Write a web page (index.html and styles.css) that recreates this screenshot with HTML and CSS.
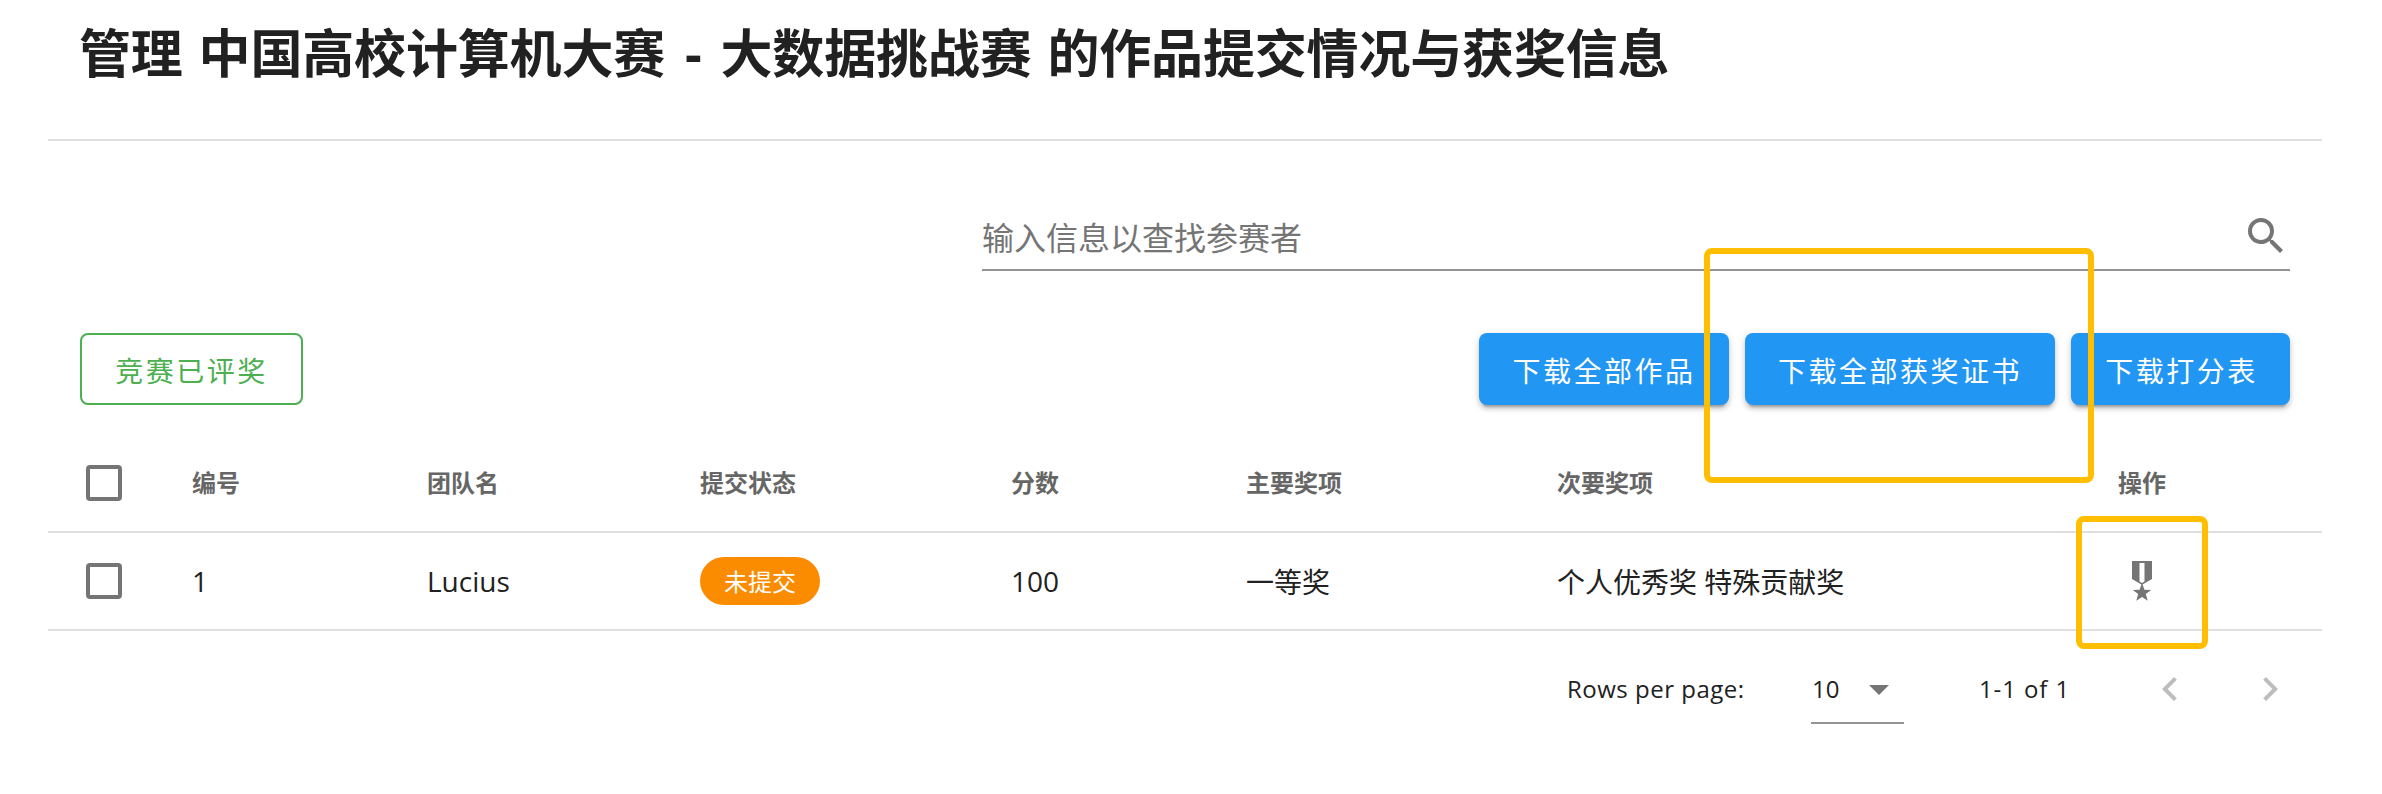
FILE: index.html
```html
<!DOCTYPE html>
<html lang="zh-CN">
<head>
<meta charset="utf-8">
<title>作品提交情况与获奖信息</title>
<link rel="stylesheet" href="styles.css">
</head>
<body>
<main class="page">
  <h1 class="title">管理 中国高校计算机大赛 <span class="dash">-</span> 大数据挑战赛 的作品提交情况与获奖信息</h1>
  <section class="search-row">
    <div class="search">
      <span class="search-hint">输入信息以查找参赛者</span>
      <svg class="icon" viewBox="0 0 24 24"><path d="M9.5,3A6.5,6.5 0 0,1 16,9.5C16,11.11 15.41,12.59 14.44,13.73L14.71,14H15.5L20.5,19L19,20.5L14,15.5V14.71L13.73,14.44C12.59,15.41 11.11,16 9.5,16A6.5,6.5 0 0,1 3,9.5A6.5,6.5 0 0,1 9.5,3M9.5,5C7,5 5,7 5,9.5C5,12 7,14 9.5,14C12,14 14,12 14,9.5C14,7 12,5 9.5,5Z"/></svg>
    </div>
  </section>
  <section class="actions">
    <button class="btn btn-outlined">竞赛已评奖</button>
    <div class="action-group">
      <button class="btn btn-works">下载全部作品</button>
      <button class="btn btn-certs">下载全部获奖证书</button>
      <button class="btn btn-scores">下载打分表</button>
    </div>
  </section>
  <section class="table">
    <div class="row row-head">
      <span class="checkbox"></span>
      <span class="label">编号</span>
      <span class="label">团队名</span>
      <span class="label">提交状态</span>
      <span class="label">分数</span>
      <span class="label">主要奖项</span>
      <span class="label">次要奖项</span>
      <span class="label">操作</span>
    </div>
    <div class="row row-body">
      <span class="checkbox"></span>
      <span>1</span>
      <span>Lucius</span>
      <span class="chip">未提交</span>
      <span>100</span>
      <span>一等奖</span>
      <span>个人优秀奖 特殊贡献奖</span>
      <svg class="icon" viewBox="0 0 24 24"><path fill-rule="evenodd" d="M7,2H17V11L12.3,13.8L13.2,16.35L16.6,16.5L13.9,18.55L14.85,21.9L12,20L9.15,21.9L10.1,18.55L7.4,16.5L10.8,16.35L11.7,13.8L7,11ZM10.75,3V12.3L12,13.05L13.25,12.3V3Z"/></svg>
    </div>
  </section>
  <footer class="footer">
    <span class="rows-label">Rows per page:</span>
    <div class="select"><span>10</span><span class="caret"></span></div>
    <span class="range">1-1 of 1</span>
    <svg class="icon disabled" viewBox="0 0 24 24"><path d="M15.41,16.58L10.83,12L15.41,7.41L14,6L8,12L14,18L15.41,16.58Z"/></svg>
    <svg class="icon disabled next" viewBox="0 0 24 24"><path d="M8.59,16.58L13.17,12L8.59,7.41L10,6L16,12L10,18L8.59,16.58Z"/></svg>
  </footer>
  <div class="marker marker-certs"></div>
  <div class="marker marker-award"></div>
</main>
</body>
</html>
```
FILE: styles.css
```css
* { box-sizing: border-box; }
body {
  margin: 0;
  background: #fff;
  color: #212121;
  font-family: "Open Sans", "Noto Sans CJK SC", sans-serif;
}
.page {
  position: relative;
  width: 2382px;
  height: 794px;
  padding: 0 60px 0 48px;
  overflow: hidden;
}
.title {
  height: 141px;
  margin: 0;
  padding: 21px 31px 0;
  border-bottom: 2px solid #e0e0e0;
  font-size: 52px;
  line-height: 64px;
  font-weight: 700;
  letter-spacing: -0.17px;
  word-spacing: 2.6px;
  white-space: nowrap;
}
.dash { margin: 0 3px 0 4px; }
.search-row {
  display: flex;
  justify-content: flex-end;
  height: 192px;
  padding: 64px 32px 0 0;
}
.search {
  display: flex;
  justify-content: space-between;
  align-items: center;
  width: 1308px;
  height: 66px;
  padding-bottom: 2px;
  border-bottom: 2px solid #949494;
  font-size: 32px;
  color: #757575;
}
.icon {
  display: block;
  width: 48px;
  height: 48px;
  fill: #757575;
}
.actions {
  display: flex;
  justify-content: space-between;
  padding: 0 32px;
}
.action-group { display: flex; gap: 16px; }
.btn {
  height: 72px;
  padding: 2px 0 0;
  border: 0;
  border-radius: 8px;
  background: #2196f3;
  color: #fff;
  font: 400 28px "Noto Sans CJK SC", sans-serif;
  letter-spacing: 2.5px;
  white-space: nowrap;
  box-shadow: 0 6px 2px -4px rgba(0,0,0,.2), 0 4px 4px rgba(0,0,0,.14), 0 2px 10px rgba(0,0,0,.12);
}
.btn-outlined {
  width: 223px;
  border: 2px solid #4caf50;
  background: transparent;
  color: #4caf50;
  box-shadow: none;
}
.btn-works { width: 250px; }
.btn-certs { width: 310px; }
.btn-scores { width: 219px; padding-left: 2px; }
.row {
  display: grid;
  grid-template-columns: 106px 235px 273px 311px 235px 311px 561px 1fr;
  align-items: center;
  padding-left: 38px;
  border-bottom: 2px solid #e0e0e0;
  white-space: nowrap;
}
.row-head {
  height: 128px;
  padding-top: 30px;
  font-size: 24px;
  font-weight: 700;
  color: #666;
}
.label { padding-bottom: 4px; }
.row-body {
  height: 98px;
  padding-bottom: 1px;
  font-size: 28px;
}
.checkbox {
  width: 36px;
  height: 36px;
  border: 4px solid #757575;
  border-radius: 4px;
}
.chip {
  display: flex;
  align-items: center;
  justify-content: center;
  width: 120px;
  height: 48px;
  border-radius: 24px;
  background: #fb8c00;
  color: #fff;
  font-size: 24px;
}
.footer {
  display: flex;
  align-items: center;
  height: 116px;
  padding-left: 1519px;
  font-size: 24px;
  white-space: nowrap;
}
.rows-label {
  width: 244px;
  padding-bottom: 2px;
  letter-spacing: 0.5px;
}
.select {
  display: flex;
  align-items: center;
  width: 93px;
  height: 70px;
  padding: 0 0 0 1px;
  border-bottom: 2px solid #949494;
}
.caret {
  margin: 4px 0 0 30px;
  border: 10px solid transparent;
  border-top-color: #757575;
  border-bottom: 0;
}
.range {
  width: 167px;
  margin-left: 75px;
  padding-bottom: 2px;
  letter-spacing: 0.9px;
}
.disabled { fill: #bdbdbd; }
.next { margin-left: 52px; }
.marker {
  position: absolute;
  border: 6px solid #ffbf00;
  border-radius: 8px;
}
.marker-certs { left: 1704px; top: 248px; width: 390px; height: 235px; }
.marker-award { left: 2076px; top: 516px; width: 132px; height: 133px; }
```
